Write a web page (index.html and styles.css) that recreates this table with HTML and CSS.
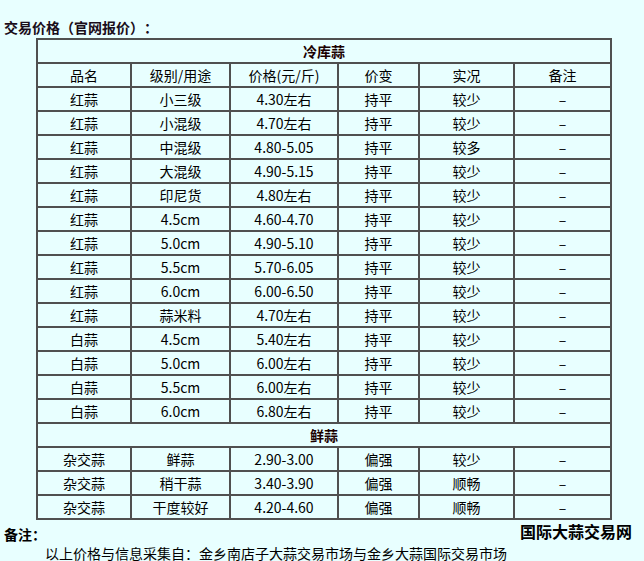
FILE: index.html
```html
<!DOCTYPE html>
<html lang="zh">
<head>
<meta charset="utf-8">
<link rel="stylesheet" href="styles.css">
</head>
<body>
<div class="title">交易价格（官网报价）：</div>
<table class="prices">
<colgroup>
<col class="c1"><col class="c2"><col class="c3"><col class="c4"><col class="c5"><col class="c6">
</colgroup>
<tr><td colspan="6" class="sec">冷库蒜</td></tr>
<tr><td>品名</td><td>级别/用途</td><td>价格(元/斤)</td><td>价变</td><td>实况</td><td>备注</td></tr>
<tr><td>红蒜</td><td>小三级</td><td>4.30左右</td><td>持平</td><td>较少</td><td>–</td></tr>
<tr><td>红蒜</td><td>小混级</td><td>4.70左右</td><td>持平</td><td>较少</td><td>–</td></tr>
<tr><td>红蒜</td><td>中混级</td><td>4.80-5.05</td><td>持平</td><td>较多</td><td>–</td></tr>
<tr><td>红蒜</td><td>大混级</td><td>4.90-5.15</td><td>持平</td><td>较少</td><td>–</td></tr>
<tr><td>红蒜</td><td>印尼货</td><td>4.80左右</td><td>持平</td><td>较少</td><td>–</td></tr>
<tr><td>红蒜</td><td>4.5cm</td><td>4.60-4.70</td><td>持平</td><td>较少</td><td>–</td></tr>
<tr><td>红蒜</td><td>5.0cm</td><td>4.90-5.10</td><td>持平</td><td>较少</td><td>–</td></tr>
<tr><td>红蒜</td><td>5.5cm</td><td>5.70-6.05</td><td>持平</td><td>较少</td><td>–</td></tr>
<tr><td>红蒜</td><td>6.0cm</td><td>6.00-6.50</td><td>持平</td><td>较少</td><td>–</td></tr>
<tr><td>红蒜</td><td>蒜米料</td><td>4.70左右</td><td>持平</td><td>较少</td><td>–</td></tr>
<tr><td>白蒜</td><td>4.5cm</td><td>5.40左右</td><td>持平</td><td>较少</td><td>–</td></tr>
<tr><td>白蒜</td><td>5.0cm</td><td>6.00左右</td><td>持平</td><td>较少</td><td>–</td></tr>
<tr><td>白蒜</td><td>5.5cm</td><td>6.00左右</td><td>持平</td><td>较少</td><td>–</td></tr>
<tr><td>白蒜</td><td>6.0cm</td><td>6.80左右</td><td>持平</td><td>较少</td><td>–</td></tr>
<tr><td colspan="6" class="sec">鲜蒜</td></tr>
<tr><td>杂交蒜</td><td>鲜蒜</td><td>2.90-3.00</td><td>偏强</td><td>较少</td><td>–</td></tr>
<tr><td>杂交蒜</td><td>稍干蒜</td><td>3.40-3.90</td><td>偏强</td><td>顺畅</td><td>–</td></tr>
<tr><td>杂交蒜</td><td>干度较好</td><td>4.20-4.60</td><td>偏强</td><td>顺畅</td><td>–</td></tr>
</table>
<div class="foot">
<span class="note">备注：</span>
<span class="brand">国际大蒜交易网</span>
</div>
<div class="source">以上价格与信息采集自：金乡南店子大蒜交易市场与金乡大蒜国际交易市场</div>
</body>
</html>
```
FILE: styles.css
```css
html, body {
  margin: 0;
  padding: 0;
  background: #e8ffff;
}
body {
  font-family: "Noto Sans CJK SC", "Noto Sans", sans-serif;
  font-size: 14px;
  color: #000;
  text-spacing-trim: space-all;
}
.title {
  padding: 17px 0 0 4px;
  height: 20px;
  line-height: 20px;
  font-weight: bold;
  color: #1a0d1a;
}
.prices {
  margin: 1px 0 0 36px;
  border-collapse: collapse;
  table-layout: fixed;
  width: 574px;
  border: 2px solid #4a4a4a;
}
.c1 { width: 94px; }
.c2 { width: 99px; }
.c3 { width: 108px; }
.c4 { width: 81px; }
.c5 { width: 95px; }
.c6 { width: 97px; }
.prices td {
  border: 2px solid #505050;
  height: 22px;
  padding: 0;
  text-align: center;
  line-height: 20px;
  white-space: nowrap;
}
.prices td.sec {
  font-weight: bold;
  color: #1a0000;
}
.foot {
  display: flex;
  justify-content: space-between;
  align-items: center;
  padding: 0 12px 0 4px;
  height: 22px;
}
.note {
  font-weight: bold;
  position: relative;
  top: 3px;
}
.brand {
  font-weight: bold;
  font-size: 16px;
}
.source {
  padding-left: 45px;
  line-height: 16px;
  margin-top: 3px;
}
```
